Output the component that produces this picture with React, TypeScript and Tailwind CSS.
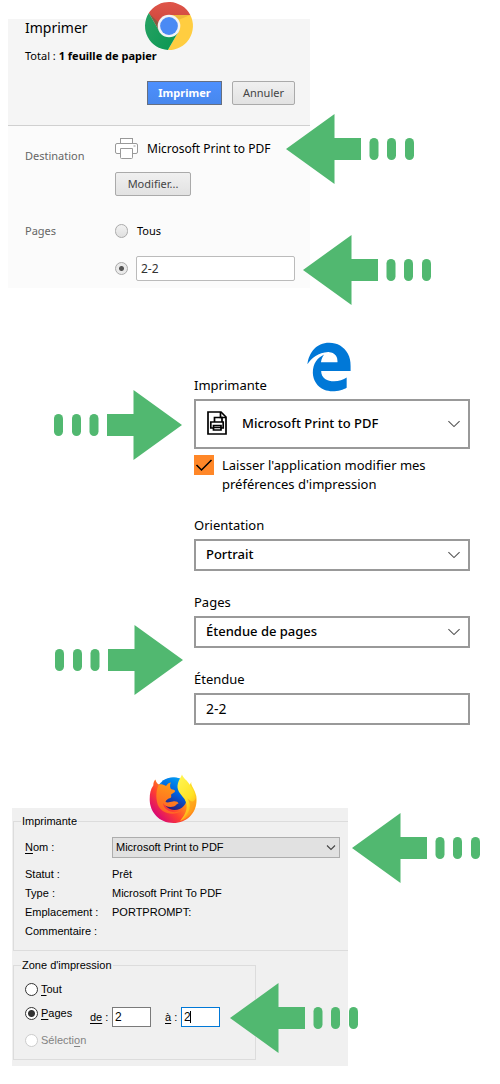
import type { ReactNode } from "react";
import { FaEdgeLegacy } from "react-icons/fa6";

function Arrow({ className, right = false }: { className: string; right?: boolean }) {
  return (
    <svg
      aria-hidden="true"
      viewBox="0 0 128 70"
      className={`pointer-events-none absolute h-[70px] w-32 fill-[#51b870] ${right ? "-scale-x-100" : ""} ${className}`}
    >
      <path d="M0 35 48.500 0V24H75V46H48.500V70Z" />
      <rect x="83.500" y="24" width="9" height="22" rx="4.500" />
      <rect x="101" y="24" width="9" height="22" rx="4.500" />
      <rect x="119" y="24" width="9" height="22" rx="4.500" />
    </svg>
  );
}

function ChromeLogo() {
  return (
    <svg aria-hidden="true" viewBox="0 0 48 48" className="absolute -top-[17px] left-[137px] h-12 w-12">
      <defs>
        <linearGradient id="cr" x1="0" y1="0" x2="0" y2="1">
          <stop offset="0" stopColor="#df5549" />
          <stop offset="1" stopColor="#c9423a" />
        </linearGradient>
        <linearGradient id="cg" x1="0" y1="0" x2="1" y2="0.600">
          <stop offset="0" stopColor="#27a263" />
          <stop offset="1" stopColor="#0d9854" />
        </linearGradient>
      </defs>
      <path fill="url(#cr)" d="M3.800 11.060A24 24 0 0 1 45.300 13H24L14.470 29.500Z" />
      <path fill="#ffcd40" d="M45.300 13A24 24 0 0 1 22.900 47.950L33.530 29.500 24 13Z" />
      <path fill="url(#cg)" d="M22.900 47.950A24 24 0 0 1 3.800 11.060L14.470 29.500H33.530Z" />
      <path fill="#e2a834" opacity=".55" d="M24 13H45.300L34.500 17.500Z" />
      <path fill="#0a7a42" opacity=".35" d="M3.800 11.060 14.470 29.500 13 20Z" />
      <circle cx="24" cy="24" r="11.300" fill="#f3f3f3" />
      <circle cx="24" cy="24" r="8.900" fill="#4a8af4" />
    </svg>
  );
}

function FirefoxLogo() {
  return (
    <svg aria-hidden="true" viewBox="0 0 48 50" className="absolute -top-[34px] left-[137px] h-[50px] w-12">
      <defs>
        <linearGradient id="fb" x1="0.800" y1="0" x2="0.400" y2="1">
          <stop offset="0" stopColor="#00a5f5" />
          <stop offset="0.500" stopColor="#0060df" />
          <stop offset="1" stopColor="#2b1a78" />
        </linearGradient>
        <linearGradient id="fo" x1="0.900" y1="0.100" x2="0.050" y2="0.800">
          <stop offset="0" stopColor="#ffe226" />
          <stop offset="0.350" stopColor="#ff9a1a" />
          <stop offset="0.650" stopColor="#ff4030" />
          <stop offset="1" stopColor="#d4007c" />
        </linearGradient>
        <linearGradient id="ff" x1="0.300" y1="0" x2="0" y2="1">
          <stop offset="0" stopColor="#ff9818" />
          <stop offset="1" stopColor="#ff5a28" />
        </linearGradient>
        <linearGradient id="fy" x1="0.300" y1="0" x2="0.700" y2="1">
          <stop offset="0" stopColor="#fff44f" />
          <stop offset="0.550" stopColor="#ffe325" />
          <stop offset="1" stopColor="#ff9c16" />
        </linearGradient>
      </defs>
      <circle cx="24" cy="21" r="17.500" fill="#0a84e8" />
      <path
        fill="url(#fo)"
        d="M6.500 5.500C7 8 8 9.500 10 10.500L20 20 36 20L42.500 7.500C41 11 45.500 14 47.300 22C49.500 37 39 49 24.500 49C10 49 1 38 .700 26C.600 20 1.500 15 4.300 11.500C4.300 8.500 5.200 6.800 6.500 5.500Z"
      />
      <path
        fill="url(#fb)"
        d="M13 8C17 4 25 2.500 31 4.500L38 22C38.500 30 33 36 25.500 36C19 36 14 31 15 24Z"
      />
      <path
        fill="url(#ff)"
        d="M10 10.500C13 9.500 16 11 17 12C18.500 9.500 20.500 8.500 22 8.500C20.500 11 21 13.500 22 15C24 16 26 15.500 26 17C26 19 23 19 22 21C22.300 22 22.500 23 21.500 24C19 24.500 17 26 16.500 28C19 29 21 28 24 27.500C27 27 29 28 29.500 29.500C27.500 29.500 27 33 21.500 33C18 33 15.500 31.500 14 29C15 37 24 40 32 37C24 43 10 39 8 28C6.500 20 8 14 10 10.500Z"
      />
      <path
        fill="url(#fy)"
        d="M33 .500C34 4 38.500 6.500 41 11C44.500 16 47 21 46 29C44.500 38 39 44 31 47C37 40 40 33 35.500 25C31 19 27 16 29 9C30 5.500 32 3.500 33 .500Z"
      />
      <path fill="#ff8b18" opacity=".55" d="M38 24C43 30 42 40 31 47C42 45 48 35 47 24C45 29 42 28 38 24Z" />
    </svg>
  );
}

function Chevron() {
  return (
    <svg
      aria-hidden="true"
      viewBox="0 0 12 7"
      className="pointer-events-none absolute top-1/2 right-2.5 h-[7px] w-3 -translate-y-1/2 fill-none stroke-[#555]"
    >
      <path d="M.4.600 6 6.100 11.600.600" strokeWidth="1.100" />
    </svg>
  );
}

function EdgeField({ id, label, children }: { id: string; label: string; children: ReactNode }) {
  return (
    <div className="relative flex flex-col">
      <label htmlFor={id} className="mb-[3px] self-start leading-[22px]">
        {label}
      </label>
      {children}
    </div>
  );
}

const edgeControl =
  "w-full appearance-none rounded-none border-2 border-[#999] bg-white outline-none";
const ffInput = "h-5 w-full border bg-white px-[2px] text-[12px] outline-none";

function ChromeDialog() {
  return (
    <section className="relative ml-2 w-full max-w-[302px] bg-[#fbfbfb] font-['Noto_Sans',sans-serif] text-[11px] text-black">
      <header className="flex flex-col border-b border-[#d0d0d0] bg-[#f5f5f5] pr-[15px] pb-5 pl-[17px]">
        <h1 className="text-[14px] leading-[18px]">Imprimer</h1>
        <p className="mt-2.5 leading-[18px]">
          Total : <b>1 feuille de papier</b>
        </p>
        <div className="mt-4 flex justify-end gap-2.5">
          <button type="button" className="h-6 w-[75px] border border-[#666f80] bg-linear-to-b from-[#4d90fe] to-[#4787ed] font-bold text-white">
            Imprimer
          </button>
          <button type="button" className="h-6 w-[63px] rounded-xs border border-[#aaa] bg-linear-to-b from-[#f0f0f0] to-[#e2e2e2] text-[#444]">
            Annuler
          </button>
        </div>
      </header>
      <div className="grid grid-cols-[90px_1fr] pr-[15px] pb-[7px] pl-[17px]">
        <span className="mt-[21px] leading-[18px] text-[#666]">Destination</span>
        <div className="mt-3">
          <div className="flex h-[22px] items-center gap-[9px]">
            <svg aria-hidden="true" viewBox="0 0 23 22" className="h-[22px] w-[23px] shrink-0 fill-white stroke-[#999]">
              <rect x="5.500" y=".5" width="12" height="6" />
              <rect x=".5" y="5.500" width="22" height="10" rx="1.500" />
              <path d="M5.500 10.500H17.500V19.500Q17.500 20.500 16.500 20.500H6.500Q5.500 20.500 5.500 19.500Z" />
              <path d="M18.500 8H20.500" />
            </svg>
            <span className="text-[12px] leading-[18px] whitespace-nowrap">Microsoft Print to PDF</span>
          </div>
          <button type="button" className="mt-3 h-6 w-[76px] rounded-xs border border-[#aaa] bg-linear-to-b from-[#f0f0f0] to-[#e2e2e2] text-[#444]">
            Modifier...
          </button>
        </div>
        <span className="mt-[26px] leading-[18px] text-[#666]">Pages</span>
        <div className="mt-[26px] flex flex-col">
          <label className="flex items-center gap-[9px] leading-[18px]">
            <input type="radio" name="chrome-pages" className="h-[14px] w-[13px] appearance-none rounded-full border border-[#aaa] bg-linear-to-b from-[#f2f2f2] to-[#e0e0e0]" />
            Tous
          </label>
          <div className="mt-4 flex items-center gap-2">
            <input
              type="radio"
              name="chrome-pages"
              aria-label="Pages"
              defaultChecked
              className="h-[13px] w-[13px] shrink-0 appearance-none rounded-full border border-[#aaa] bg-[radial-gradient(circle,#555_2px,#eaeaea_3px)]"
            />
            <input type="text" aria-label="Pages à imprimer" defaultValue="2-2" className="h-[25px] w-full min-w-0 rounded-xs border border-[#bbb] bg-white px-1 text-[12px] text-[#333] outline-none" />
          </div>
        </div>
      </div>
      <ChromeLogo />
      <Arrow className="top-[95px] left-[278px]" />
      <Arrow className="top-[216px] left-[295px]" />
    </section>
  );
}

function EdgeDialog() {
  return (
    <section className="mt-[86px] flex flex-col gap-5 pr-[30px] pl-[194px] font-['Noto_Sans',sans-serif] text-[13px] text-black">
      <div className="relative">
        <EdgeField id="edge-printer" label="Imprimante">
          <div className="relative flex">
            <select id="edge-printer" className={`h-[50px] pl-[46px] font-medium ${edgeControl}`}>
              <option>Microsoft Print to PDF</option>
            </select>
            <svg aria-hidden="true" viewBox="0 0 20 24" className="pointer-events-none absolute top-3 left-[13px] h-6 w-5 fill-none stroke-black" strokeWidth="1.700">
              <path d="M1 1H14L19 6V23H1Z" />
              <path d="M13.500 1V6.500H19" />
              <path d="M7.500 11V6.500H15V11M6 17H3.800V11H16.200V17H14.500M6.500 14.500H14V19H6.500ZM6.500 16.500H14" />
            </svg>
            <Chevron />
          </div>
        </EdgeField>
        <label className="mt-1.5 flex gap-2">
          <span className="relative h-5 w-5 shrink-0">
            <input type="checkbox" defaultChecked className="block h-5 w-5 appearance-none bg-[#ff8728]" />
            <svg aria-hidden="true" viewBox="0 0 20 20" className="pointer-events-none absolute inset-0 fill-none stroke-black" strokeWidth="1.500">
              <path d="M2.500 10 7.500 15 17.500 5" />
            </svg>
          </span>
          <span className="pt-px leading-[19px]">
            Laisser l'application modifier mes
            <br />
            préférences d'impression
          </span>
        </label>
        <FaEdgeLegacy
          aria-hidden="true"
          preserveAspectRatio="none"
          className="absolute -top-8 left-[111px] h-[50px] w-12 text-[#0078d7]"
        />
        <Arrow right className="top-4 right-full mr-3" />
      </div>
      <EdgeField id="edge-orientation" label="Orientation">
        <div className="relative flex">
          <select id="edge-orientation" className={`h-8 pl-2.5 font-medium ${edgeControl}`}>
            <option>Portrait</option>
          </select>
          <Chevron />
        </div>
      </EdgeField>
      <EdgeField id="edge-pages" label="Pages">
        <div className="relative flex">
          <select id="edge-pages" className={`h-8 pl-2.5 font-medium ${edgeControl}`}>
            <option>Étendue de pages</option>
          </select>
          <Chevron />
        </div>
        <Arrow right className="top-[34px] right-full mr-[11px]" />
      </EdgeField>
      <EdgeField id="edge-range" label="Étendue">
        <input id="edge-range" type="text" defaultValue="2-2" className={`h-8 px-2.5 pb-0.5 text-[14px] ${edgeControl}`} />
      </EdgeField>
    </section>
  );
}

const printerInfo = [
  ["Statut :", "Prêt"],
  ["Type :", "Microsoft Print To PDF"],
  ["Emplacement :", "PORTPROMPT:"],
  ["Commentaire :", ""],
];

const ffRadio =
  "h-[13px] w-[13px] shrink-0 appearance-none rounded-full border border-[#333] bg-white checked:bg-[radial-gradient(circle,#333_3px,#fff_4px)] disabled:border-[#ccc]";

function FirefoxDialog() {
  return (
    <section className="relative mt-[83px] ml-3 w-full max-w-[336px] bg-[#f0f0f0] pt-1.5 pb-1.5 pl-px font-['Liberation_Sans',sans-serif] text-[11px] text-black">
      <fieldset className="border border-r-0 border-[#dcdcdc] pr-2 pb-[9px] pl-[11px]">
        <legend className="-ml-1 px-px leading-[14px]">Imprimante</legend>
        <div className="mt-[9px] grid grid-cols-[87px_1fr] items-center">
          <label htmlFor="ff-printer">
            <u className="underline-offset-2">N</u>om :
          </label>
          <div className="relative flex">
            <select id="ff-printer" className="h-[21px] w-full appearance-none rounded-none border border-[#adadad] bg-[#e1e1e1] pl-[3px] outline-none">
              <option>Microsoft Print to PDF</option>
            </select>
            <svg aria-hidden="true" viewBox="0 0 10 6" className="pointer-events-none absolute top-2 right-1 h-1.5 w-2.5 fill-none stroke-[#444]">
              <path d="M1 .5 5 4.500 9 .5" strokeWidth="1.100" />
            </svg>
          </div>
        </div>
        <dl className="mt-[7px] grid grid-cols-[87px_1fr] leading-[19px]">
          {printerInfo.map(([name, value]) => (
            <div key={name} className="contents">
              <dt>{name}</dt>
              <dd>{value}</dd>
            </div>
          ))}
        </dl>
      </fieldset>
      <fieldset className="mt-[7px] w-[243px] border border-[#dcdcdc] pb-[11px] pl-[11px]">
        <legend className="-ml-1 px-px leading-[14px]">Zone d'impression</legend>
        <label className="mt-[10px] flex items-center gap-[3px] leading-[15px]">
          <input type="radio" name="ff-range" className={ffRadio} />
          <span>
            <u className="underline-offset-2">T</u>out
          </span>
        </label>
        <div className="mt-2.5 flex h-5 items-center">
          <label className="mb-2 flex w-[65px] items-center gap-[3px] leading-[15px]">
            <input type="radio" name="ff-range" defaultChecked className={ffRadio} />
            <span>
              <u className="underline-offset-2">P</u>ages
            </span>
          </label>
          <label htmlFor="ff-from" className="w-[22px]">
            <u className="underline-offset-2">de</u> :
          </label>
          <span className="w-[39px]">
            <input id="ff-from" type="text" defaultValue="2" className={`border-[#7a7a7a] ${ffInput}`} />
          </span>
          <label htmlFor="ff-to" className="ml-[14px] w-4">
            <u className="underline-offset-2">à</u> :
          </label>
          <span className="relative w-[39px]">
            <input id="ff-to" type="text" defaultValue="2" className={`border-[#0078d7] ${ffInput}`} />
            <span className="absolute top-1 left-[9px] h-3 w-px bg-black" />
          </span>
        </div>
        <label className="mt-[6px] flex items-center gap-[3px] leading-[15px] text-[#838383]">
          <input type="radio" name="ff-range" disabled className={ffRadio} />
          <span>
            Sélecti<u className="underline-offset-2">o</u>n
          </span>
        </label>
      </fieldset>
      <FirefoxLogo />
      <Arrow className="top-[5px] left-[340px]" />
      <Arrow className="top-[175px] left-[218px]" />
    </section>
  );
}

export default function App() {
  return (
    <main className="min-h-screen overflow-x-hidden bg-white pt-[19px] pb-[18px]">
      <ChromeDialog />
      <EdgeDialog />
      <FirefoxDialog />
    </main>
  );
}
